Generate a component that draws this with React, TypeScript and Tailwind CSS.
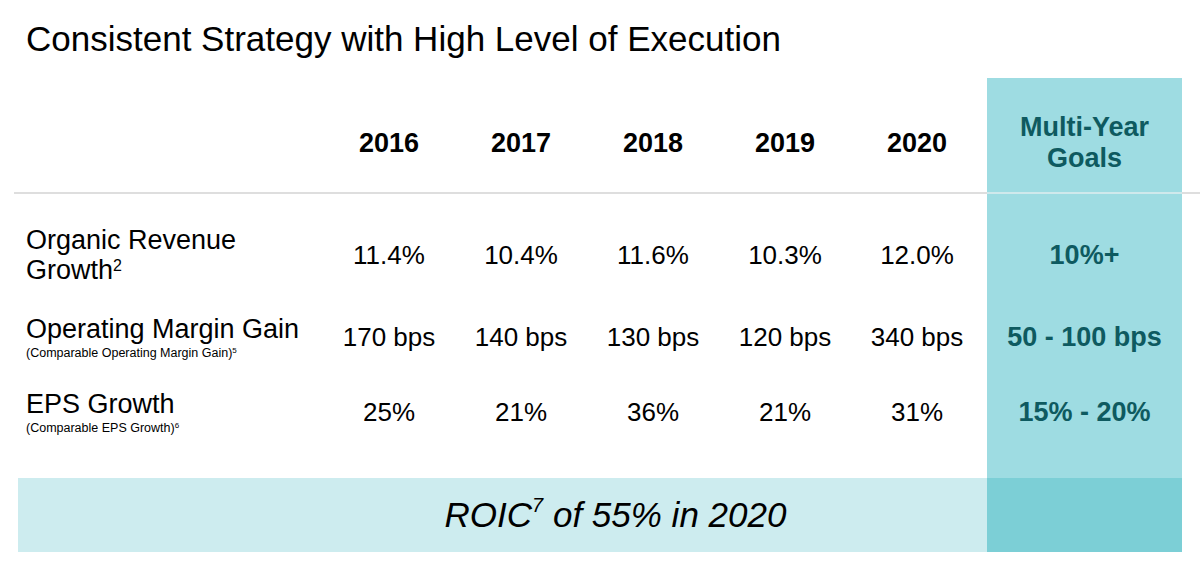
import React from 'react';

const years = ['2016', '2017', '2018', '2019', '2020'];

const rows = [
  {
    label: (
      <>
        Organic Revenue
        <br />
        Growth<sup className="text-[16px]">2</sup>
      </>
    ),
    sub: null as React.ReactNode,
    values: ['11.4%', '10.4%', '11.6%', '10.3%', '12.0%'],
    goal: '10%+',
    h: 'h-[102px]',
    pad: 'pt-[20px]',
  },
  {
    label: <>Operating Margin Gain</>,
    sub: (
      <>
        (Comparable Operating Margin Gain)<sup className="text-[8px]">5</sup>
      </>
    ),
    values: ['170 bps', '140 bps', '130 bps', '120 bps', '340 bps'],
    goal: '50 - 100 bps',
    h: 'h-[78px]',
    pad: 'pt-[4px]',
  },
  {
    label: <>EPS Growth</>,
    sub: (
      <>
        (Comparable EPS Growth)<sup className="text-[8px]">6</sup>
      </>
    ),
    values: ['25%', '21%', '36%', '21%', '31%'],
    goal: '15% - 20%',
    h: 'h-[76px]',
    pad: 'pt-0',
  },
];

const App: React.FC = () => {
  return (
    <div className="w-[1200px] h-[570px] bg-white text-black font-['Liberation_Sans',Arial,sans-serif] overflow-hidden">
      {/* Title */}
      <h1 className="h-[78px] pl-[26px] pt-[19px] text-[35px] leading-[40px]">
        Consistent Strategy with High Level of Execution
      </h1>

      {/* Header row */}
      <div className="flex h-[114px]">
        <div className="w-[323px]" />
        {years.map((y) => (
          <div key={y} className="w-[132px] flex items-center justify-center pt-[16px] text-[27px] font-bold">
            {y}
          </div>
        ))}
        <div className="w-[4px]" />
        <div className="w-[195px] bg-[#9edce2] flex items-center justify-center pt-[16px] text-center text-[27px] leading-[31px] font-bold text-[#0e5a60]">
          Multi-Year
          <br />
          Goals
        </div>
      </div>

      {/* Divider */}
      <div className="flex h-[2px]">
        <div className="ml-[14px] w-[973px] bg-[#dedede]" />
        <div className="w-[195px] bg-[#cfe9ec]" />
        <div className="flex-1 bg-[#dedede]" />
      </div>

      {/* Data rows */}
      {rows.map((r, i) => (
        <div key={i} className={`flex ${r.h}`}>
          <div className={`w-[323px] pl-[26px] flex flex-col justify-center ${r.pad}`}>
            <div className="text-[27px] leading-[30px]">{r.label}</div>
            {r.sub && <div className="text-[12.5px] leading-[14px] mt-[2px]">{r.sub}</div>}
          </div>
          {r.values.map((v, j) => (
            <div key={j} className={`w-[132px] flex items-center justify-center text-[26px] ${r.pad}`}>
              {v}
            </div>
          ))}
          <div className="w-[4px]" />
          <div className={`w-[195px] bg-[#9edce2] flex items-center justify-center text-[27px] font-bold text-[#0e5a60] ${r.pad}`}>
            {r.goal}
          </div>
        </div>
      ))}

      {/* Spacer, goals column keeps going */}
      <div className="flex h-[28px]">
        <div className="w-[987px]" />
        <div className="w-[195px] bg-[#9edce2]" />
      </div>

      {/* ROIC band */}
      <div className="flex h-[74px]">
        <div className="ml-[18px] w-[969px] bg-[#cdecef] flex items-center justify-center pl-[226px] text-[35px] italic">
          ROIC<sup className="text-[20px]">7</sup>&nbsp;of 55% in 2020
        </div>
        <div className="w-[195px] bg-[#7ccfd6]" />
      </div>
    </div>
  );
};

export default App;
